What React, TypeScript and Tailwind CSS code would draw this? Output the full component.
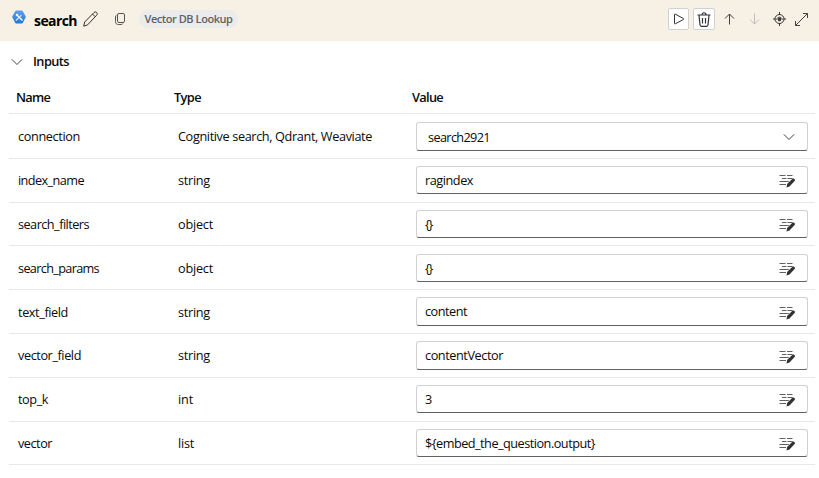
import React from "react";

const rows = [
  { name: "connection", type: "Cognitive search, Qdrant, Weaviate", value: "search2921", row: "h-[45px]", label: "pt-3", box: "mt-2 h-[29px] pl-[11px]", nw: 62, tw: 194, vw: 62 },
  { name: "index_name", type: "string", value: "ragindex", row: "h-[44px]", label: "pt-[11px]", box: "mt-[7px] h-7 pl-2", nw: 66, tw: 32, vw: 48 },
  { name: "search_filters", type: "object", value: "{}", row: "h-[43px]", label: "pt-[11px]", box: "mt-[7px] h-7 pl-2", nw: 71, tw: 35, vw: 7 },
  { name: "search_params", type: "object", value: "{}", row: "h-[44px]", label: "pt-3", box: "mt-2 h-7 pl-2", nw: 81, tw: 35, vw: 7 },
  { name: "text_field", type: "string", value: "content", row: "h-[44px]", label: "pt-3", box: "mt-[7px] h-[29px] pl-2", nw: 50, tw: 32, vw: 42 },
  { name: "vector_field", type: "string", value: "contentVector", row: "h-[44px]", label: "pt-[11px]", box: "mt-[7px] h-[29px] pl-2", nw: 63, tw: 32, vw: 78 },
  { name: "top_k", type: "int", value: "3", row: "h-[44px]", label: "pt-[11px]", box: "mt-[7px] h-7 pl-2", nw: 30, tw: 15, vw: 7 },
  { name: "vector", type: "list", value: "${embed_the_question.output}", row: "h-[43px]", label: "pt-[11px]", box: "mt-[7px] h-7 pl-2", nw: 34, tw: 16, vw: 170 },
];

/* Label whose letter spacing is fitted to a known width. */
function T({ children, w, className = "text-[12.7px] text-[#0a0a0a]" }: { children: string; w: number; className?: string }) {
  const ref = React.useRef<HTMLSpanElement>(null);
  const [ls, setLs] = React.useState(0);
  React.useLayoutEffect(() => {
    const el = ref.current;
    if (el && children.length > 1) setLs((w - el.getBoundingClientRect().width) / children.length);
  }, []);
  return (
    <div className="whitespace-pre leading-[18px]">
      <span ref={ref} className={className} style={{ letterSpacing: ls }}>
        {children}
      </span>
    </div>
  );
}

function Chevron() {
  return (
    <svg width="12" height="8" viewBox="0 0 12 8" fill="none" stroke="#424242" strokeWidth="1">
      <path d="M.8 1.300 6 6.500l5.200-5.200" />
    </svg>
  );
}

function EditLines() {
  return (
    <svg className="mt-[2px]" width="16" height="14" viewBox="0 0 16 14" fill="none">
      <path d="M.5 1.500h6M8 1.500h5.500M3 4.500h4.500M8.500 4.500h5M.5 7.500h9.300M.5 10.500h6.500" stroke="#616161" strokeWidth="1.200" />
      <path d="m7.500 13.500.6-3.500 5.300-5.200c1.400-1.200 3.400.8 2.200 2.200l-5.100 5.600z" fill="#333" />
    </svg>
  );
}

export default function App() {
  const head = "text-[12.8px] font-semibold text-[#0a0a0a]";
  return (
    <div className="h-[478px] w-[819px] overflow-hidden bg-white font-['Open_Sans','Noto_Sans',sans-serif] text-[#0a0a0a]">
      <header className="flex h-[41px] items-center bg-[#f7f1e5] pl-3">
        <svg className="mb-[7px]" width="14" height="14" viewBox="0 0 14 14">
          <defs>
            <linearGradient id="hex" x2="0" y2="1">
              <stop stopColor="#5ea0ef" />
              <stop offset="1" stopColor="#1f78d6" />
            </linearGradient>
          </defs>
          <path d="M4.200.5h5.600c.4 0 .7.200.9.500l2.900 5.300c.2.400.2.900 0 1.300L10.700 13c-.2.300-.5.500-.9.500H4.200c-.4 0-.7-.2-.9-.5L.4 7.600a1.500 1.500 0 0 1 0-1.300L3.300 1c.2-.3.500-.5.900-.5z" fill="url(#hex)" />
          <path d="m5 5 5 5" stroke="#fff" strokeWidth="1.500" strokeLinecap="round" />
          <path d="M3.500 4.900 5 3.400l1.400 1.400L5 6.300z" fill="#fff" />
          <path d="m9 5.500-4.800 4.700" stroke="#d4e6fb" strokeWidth="1.200" strokeLinecap="round" />
        </svg>
        <div className="mb-[1px] ml-2 w-[49px]"><T w={43} className="text-[14px] font-bold text-black">search</T></div>
        <svg className="mb-1" width="15" height="16" viewBox="0 0 15 16" fill="none" stroke="#333">
          <path d="m.7 15.200 1-4.200L11 1.500c1.800-1.800 4.500.9 2.700 2.700L4.500 13.900zM9.500 3l2.700 2.700" />
        </svg>
        <svg className="mb-[3px] ml-[17px]" width="10" height="12" viewBox="0 0 10 12" fill="none" stroke="#555">
          <rect x="2.500" y=".5" width="7" height="9" rx="1.500" />
          <path d="M1.500 2.200C.8 2.500.5 3 .5 4v4.500c0 2 1 3 3 3h2.700c.8 0 1.300-.3 1.600-1" />
        </svg>
        <div className="mb-[3px] ml-[14px] flex h-[18px] w-[99px] items-center justify-center rounded-full bg-[#ebebeb] pb-[2px]">
          <T w={88} className="text-[11px] font-semibold text-[#616161]">Vector DB Lookup</T>
        </div>
        <div className="mb-[3px] ml-auto mr-[11px] flex items-center">
          <div className="flex h-[22px] w-[21px] items-center justify-center rounded-[2px] border border-[#d1d1d1] bg-white">
            <svg width="12" height="12" viewBox="0 0 12 12" fill="none" stroke="#333"><path d="M1.500 1.500v9c0 .4.400.6.700.4l8.200-4.400c.5-.3.5-.7 0-1L2.200 1.100c-.3-.2-.7 0-.7.4z" /></svg>
          </div>
          <div className="ml-1 flex h-[22px] w-[22px] items-center justify-center rounded-[2px] border border-[#d1d1d1] bg-white">
            <svg width="14" height="15" viewBox="0 0 14 15" fill="none" stroke="#333" strokeWidth="1.200"><path d="M.5 3h13M5 3c0-3 4-3 4 0M2 3l1 10c.1.800.600 1.300 1.400 1.300h5.200c.8 0 1.300-.5 1.400-1.300l1-10M5.500 6v5.500M8.500 6v5.500" /></svg>
          </div>
          <svg className="ml-[9px]" width="11" height="12" viewBox="0 0 11 12" fill="none" stroke="#424242"><path d="M5.500 11.500V1M1 5.500 5.500 1 10 5.500" /></svg>
          <svg className="ml-[14px]" width="11" height="12" viewBox="0 0 11 12" fill="none" stroke="#bdbdbd"><path d="M5.500.5V11M1 6.500 5.500 11 10 6.500" /></svg>
          <svg className="ml-[13px]" width="13" height="14" viewBox="0 0 13 14" fill="none" stroke="#333"><circle cx="6.500" cy="7" r="4.500" /><path d="M3.500 7.500c.8-3 5.200-3 6 0" /><circle cx="6.500" cy="7.500" r="1.400" fill="#333" /><path d="M6.500 0v3M6.500 11v3M0 7h2.500M10.500 7H13" /></svg>
          <svg className="ml-[9px]" width="13" height="13" viewBox="0 0 13 13" fill="none" stroke="#424242"><path d="M.5 12.500l12-12M8 .5h4.500V5M.5 8v4.500H5" /></svg>
        </div>
      </header>
      <div className="flex h-[41px] items-center pl-[11px]">
        <Chevron />
        <div className="mb-[3px] ml-[10px]"><T w={36} className={head}>Inputs</T></div>
      </div>
      <div className="ml-[9px] w-[806px]">
        <div className="grid h-8 grid-cols-[158px_238px_1fr] items-center border-b border-[#e8e8e8] pb-[3px] pl-[7px]">
          <T w={34} className={head}>Name</T>
          <T w={27} className={head}>Type</T>
          <T w={31} className={head}>Value</T>
        </div>
        {rows.map((r, i) => (
          <div key={r.name} className={`grid grid-cols-[160px_238px_392px] items-start border-b border-[#e8e8e8] pl-[9px] ${r.row}`}>
            <div className={r.label}><T w={r.nw}>{r.name}</T></div>
            <div className={r.label}><T w={r.tw}>{r.type}</T></div>
            <div className={`flex items-center justify-between rounded-[3px] border border-[#d1d1d1] border-b-[#616161] pr-3 ${r.box}`}>
              <div className={i === 0 ? "" : "pb-[2px]"}><T w={r.vw}>{r.value}</T></div>
              {i === 0 ? <Chevron /> : <EditLines />}
            </div>
          </div>
        ))}
      </div>
    </div>
  );
}
